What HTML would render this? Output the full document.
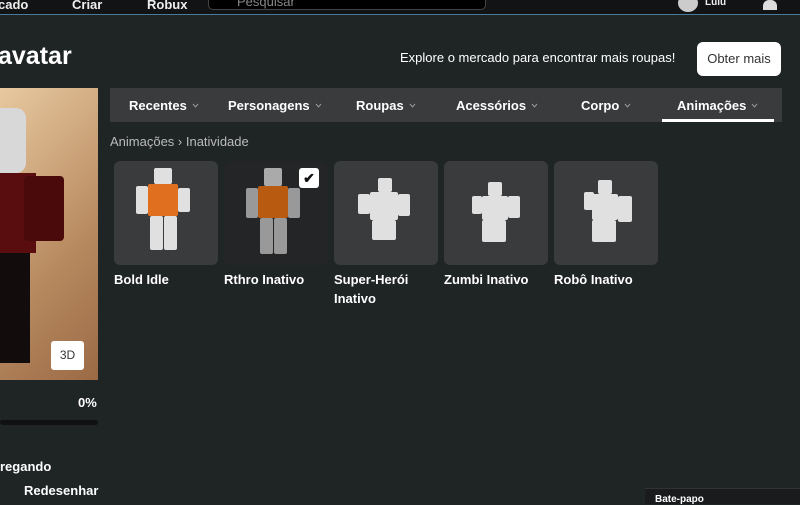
<!DOCTYPE html>
<html><head><meta charset="utf-8"><style>
*{margin:0;padding:0;box-sizing:border-box}
body{width:800px;height:504px;overflow:hidden;background:#1f2425;font-family:"Liberation Sans",sans-serif;color:#fff;position:relative}
.top{position:absolute;left:0;top:0;width:800px;height:15px;background:#111314;border-bottom:1px solid #4a7a99}
.top span{position:absolute;top:-3px;font-size:13px;font-weight:bold;color:#eee}
.search{position:absolute;left:208px;top:-6px;width:278px;height:16px;background:#000;border:1px solid #444;border-radius:5px;color:#888;font-size:13px;padding-left:28px;line-height:14px}
h1{position:absolute;left:-2px;top:42px;font-size:25px;font-weight:bold}
.explore{position:absolute;left:400px;top:50px;font-size:13px}
.btn{position:absolute;left:697px;top:42px;width:84px;height:34px;background:#fff;color:#333;border-radius:6px;font-size:13px;text-align:center;line-height:34px}
.av{position:absolute;left:0;top:88px;width:98px;height:292px;background:linear-gradient(135deg,#e8c9a0,#b88a60 60%,#9a6a45);overflow:hidden}
.av .body{position:absolute;left:0;top:85px;width:36px;height:80px;background:#5a0d0f}
.av .arm{position:absolute;left:24px;top:88px;width:40px;height:65px;background:#4a0a0c;border-radius:4px}
.av .leg{position:absolute;left:0;top:165px;width:30px;height:110px;background:#120c0c}
.d3{position:absolute;left:51px;top:341px;width:33px;height:29px;background:#fff;color:#333;border-radius:3px;font-size:12px;text-align:center;line-height:29px}
.pct{position:absolute;left:78px;top:395px;font-size:13px;font-weight:bold}
.bar{position:absolute;left:0;top:420px;width:98px;height:5px;background:#111;border-radius:3px}
.t1{position:absolute;left:0;top:459px;font-size:13px;font-weight:bold}
.t2{position:absolute;left:24px;top:483px;font-size:13px;font-weight:bold}
.tabs{position:absolute;left:110px;top:88px;width:672px;height:34px;background:#393b3d}
.tabs span{position:absolute;top:10px;font-size:13px;font-weight:bold}
.tabs svg{margin-left:5px;vertical-align:2px}
.ul{position:absolute;left:662px;top:119px;width:112px;height:3px;background:#fff}
.crumb{position:absolute;left:110px;top:134px;font-size:13px;color:#bbb}
.card{position:absolute;top:161px;width:104px;height:104px;background:#393b3d;border-radius:6px}
.card.sel{background:#232527}
.lbl{position:absolute;top:270px;font-size:13px;font-weight:bold;line-height:19px}
.fig{position:absolute}
.fig b{position:absolute;display:block;background:#e0e0e0;border-radius:2px}
.chk{position:absolute;left:299px;top:168px;width:20px;height:20px;background:#fff;border-radius:3px;color:#111;font-size:14px;text-align:center;line-height:20px;font-weight:bold}
.chat{position:absolute;left:645px;top:488px;width:155px;height:16px;background:#191b1c;border-top:1px solid #333;font-size:10px;font-weight:bold;padding:5px 10px}
</style></head><body>
<div class="top"><span style="left:-2px">cado</span><span style="left:72px">Criar</span><span style="left:147px">Robux</span><div class="search">Pesquisar</div><span style="left:705px;font-size:10px">Lulu</span><div style="position:absolute;left:678px;top:-6px;width:20px;height:18px;border-radius:50%;background:#ccc"></div><div style="position:absolute;left:763px;top:0;width:14px;height:10px;background:#ddd;border-radius:6px 6px 0 0"></div></div>
<h1>avatar</h1>
<div class="explore">Explore o mercado para encontrar mais roupas!</div>
<div class="btn">Obter mais</div>
<div class="av"><div style="position:absolute;left:0;top:20px;width:26px;height:65px;background:#d8d8d8;border-radius:0 10px 10px 0"></div><div class="body"></div><div class="arm"></div><div class="leg"></div></div>
<div class="d3">3D</div>
<div class="pct">0%</div><div class="bar"></div>
<div class="t1">regando</div><div class="t2">Redesenhar</div>
<div class="tabs">
<span style="left:19px">Recentes<svg width="7" height="5"><path d="M1 1l2.5 3L6 1" stroke="#999" fill="none"/></svg></span>
<span style="left:118px">Personagens<svg width="7" height="5"><path d="M1 1l2.5 3L6 1" stroke="#999" fill="none"/></svg></span>
<span style="left:246px">Roupas<svg width="7" height="5"><path d="M1 1l2.5 3L6 1" stroke="#999" fill="none"/></svg></span>
<span style="left:346px">Acessórios<svg width="7" height="5"><path d="M1 1l2.5 3L6 1" stroke="#999" fill="none"/></svg></span>
<span style="left:471px">Corpo<svg width="7" height="5"><path d="M1 1l2.5 3L6 1" stroke="#999" fill="none"/></svg></span>
<span style="left:567px">Animações<svg width="7" height="5"><path d="M1 1l2.5 3L6 1" stroke="#999" fill="none"/></svg></span>
</div><div class="ul"></div>
<div class="crumb">Animações › Inatividade</div>

<div class="card" style="left:114px"></div>
<div class="card sel" style="left:224px"></div>
<div class="card" style="left:334px"></div>
<div class="card" style="left:444px"></div>
<div class="card" style="left:554px"></div>

<div class="fig" style="left:134px;top:168px"><b style="left:20px;top:0;width:18px;height:16px"></b><b style="left:14px;top:16px;width:30px;height:32px;background:#e07020"></b><b style="left:2px;top:18px;width:12px;height:28px"></b><b style="left:44px;top:20px;width:12px;height:24px"></b><b style="left:16px;top:48px;width:13px;height:34px"></b><b style="left:30px;top:48px;width:13px;height:34px"></b></div>
<div class="fig" style="left:244px;top:168px"><b style="left:20px;top:0;width:18px;height:18px;background:#aaa"></b><b style="left:14px;top:18px;width:30px;height:32px;background:#b85a10"></b><b style="left:2px;top:20px;width:12px;height:30px;background:#999"></b><b style="left:44px;top:20px;width:12px;height:30px;background:#999"></b><b style="left:16px;top:50px;width:13px;height:36px;background:#999"></b><b style="left:30px;top:50px;width:13px;height:36px;background:#999"></b></div>
<div class="fig" style="left:356px;top:178px"><b style="left:22px;top:0;width:14px;height:14px"></b><b style="left:14px;top:14px;width:28px;height:28px"></b><b style="left:2px;top:16px;width:12px;height:20px"></b><b style="left:42px;top:16px;width:12px;height:22px"></b><b style="left:16px;top:42px;width:24px;height:20px"></b></div>
<div class="fig" style="left:472px;top:182px"><b style="left:16px;top:0;width:14px;height:14px"></b><b style="left:10px;top:14px;width:26px;height:24px"></b><b style="left:0;top:14px;width:10px;height:18px"></b><b style="left:36px;top:14px;width:12px;height:22px"></b><b style="left:10px;top:38px;width:24px;height:22px"></b></div>
<div class="fig" style="left:584px;top:180px"><b style="left:14px;top:0;width:14px;height:14px"></b><b style="left:8px;top:14px;width:26px;height:26px"></b><b style="left:0;top:12px;width:10px;height:18px"></b><b style="left:34px;top:16px;width:14px;height:26px"></b><b style="left:8px;top:40px;width:24px;height:22px"></b></div>
<div class="chk">✔</div>

<div class="lbl" style="left:114px">Bold Idle</div>
<div class="lbl" style="left:224px">Rthro Inativo</div>
<div class="lbl" style="left:334px">Super-Herói<br>Inativo</div>
<div class="lbl" style="left:444px">Zumbi Inativo</div>
<div class="lbl" style="left:554px">Robô Inativo</div>
<div class="chat">Bate-papo</div>
</body></html>
